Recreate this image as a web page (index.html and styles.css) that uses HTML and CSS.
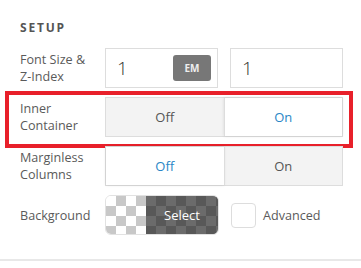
FILE: index.html
```html
<!DOCTYPE html>
<html lang="en">
<head>
  <meta charset="UTF-8">
  <title>Setup</title>
  <link rel="stylesheet" href="styles.css">
</head>
<body>

  <div class="panel">
    <h3 class="section-title">Setup</h3>

    <div class="row">
      <span class="label">Font Size &amp;<br>Z-Index</span>
      <div class="controls">
        <div class="field">
          <span class="value">1</span>
          <span class="unit">EM</span>
        </div>
        <div class="field">
          <span class="value">1</span>
        </div>
      </div>
    </div>

    <!-- highlighted row -->
    <div class="row highlight">
      <span class="label">Inner<br>Container</span>
      <div class="toggle">
        <span class="opt">Off</span>
        <span class="opt active">On</span>
      </div>
    </div>

    <div class="row">
      <span class="label">Marginless<br>Columns</span>
      <div class="toggle">
        <span class="opt active">Off</span>
        <span class="opt">On</span>
      </div>
    </div>

    <div class="row">
      <span class="label">Background</span>
      <div class="controls">
        <div class="swatch">
          <span class="swatch-light"></span>
          <span class="swatch-dark">Select</span>
        </div>
        <label class="check">
          <span class="box"></span>
          <span>Advanced</span>
        </label>
      </div>
    </div>
  </div>

</body>
</html>
```

FILE: styles.css
```css
body {
  margin: 0;
  background: #fff;
  font-family: "Open Sans", sans-serif;
  color: #555;
}
.panel {
  padding: 20px 18px 0 20px;
  height: 239px;
  border-bottom: 2px solid #e8e8e8;
}
.section-title {
  margin: 0 0 12px;
  font-size: 12px;
  line-height: 16px;
  font-weight: 700;
  letter-spacing: 1.8px;
  text-transform: uppercase;
  color: #555;
}
.row {
  display: flex;
  align-items: center;
  height: 40px;
  margin-bottom: 9px;
  position: relative;
}
.label {
  width: 85px;
  flex-shrink: 0;
  font-size: 12.6px;
  line-height: 17px;
  color: #5a5a5a;
}
.controls {
  display: flex;
  align-items: center;
  gap: 12px;
  flex: 1;
}
.field {
  flex: 1;
  height: 40px;
  box-sizing: border-box;
  border: 1px solid #ddd;
  display: flex;
  align-items: center;
  justify-content: space-between;
  padding: 0 6px 0 11px;
}
.field .value {
  font-size: 19px;
  font-weight: 300;
  color: #333;
}
.unit {
  width: 38px;
  height: 26px;
  line-height: 26px;
  text-align: center;
  background: #777;
  color: #eee;
  font-size: 10px;
  font-weight: 700;
  border-radius: 3px;
}
.toggle {
  flex: 1;
  display: flex;
  height: 40px;
  box-sizing: border-box;
  border: 1px solid #ddd;
  background: #f3f3f3;
}
.opt {
  flex: 1;
  display: flex;
  align-items: center;
  justify-content: center;
  font-size: 13px;
  color: #555;
}
.opt + .opt {
  border-left: 1px solid #ddd;
}
.opt.active {
  background: #fff;
  color: #2a86c6;
  box-shadow: 0 0 3px rgba(0, 0, 0, 0.12);
}
.highlight::after {
  content: "";
  position: absolute;
  top: -6px;
  bottom: -11px;
  left: -15px;
  right: -10px;
  border: 4px solid #e8202a;
  pointer-events: none;
}
.swatch {
  width: 114px;
  height: 40px;
  display: flex;
  border-radius: 6px;
  overflow: hidden;
  border: 1px solid #e2e2e2;
  box-sizing: border-box;
}
.swatch-light {
  width: 40px;
  background-color: #fff;
  background-image:
    linear-gradient(45deg, #c8c8c8 25%, transparent 25%, transparent 75%, #c8c8c8 75%),
    linear-gradient(45deg, #c8c8c8 25%, transparent 25%, transparent 75%, #c8c8c8 75%);
  background-size: 20px 20px;
  background-position: 0 0, 10px 10px;
}
.swatch-dark {
  flex: 1;
  display: flex;
  align-items: center;
  justify-content: center;
  color: #fff;
  font-size: 13px;
  background-color: #6b6b6b;
  background-image:
    linear-gradient(45deg, #585858 25%, transparent 25%, transparent 75%, #585858 75%),
    linear-gradient(45deg, #585858 25%, transparent 25%, transparent 75%, #585858 75%);
  background-size: 20px 20px;
  background-position: 0 0, 10px 10px;
}
.check {
  display: flex;
  align-items: center;
  gap: 7px;
  font-size: 12.6px;
  color: #5a5a5a;
}
.check .box {
  width: 25px;
  height: 25px;
  box-sizing: border-box;
  border: 1px solid #ddd;
  border-radius: 4px;
}
```
